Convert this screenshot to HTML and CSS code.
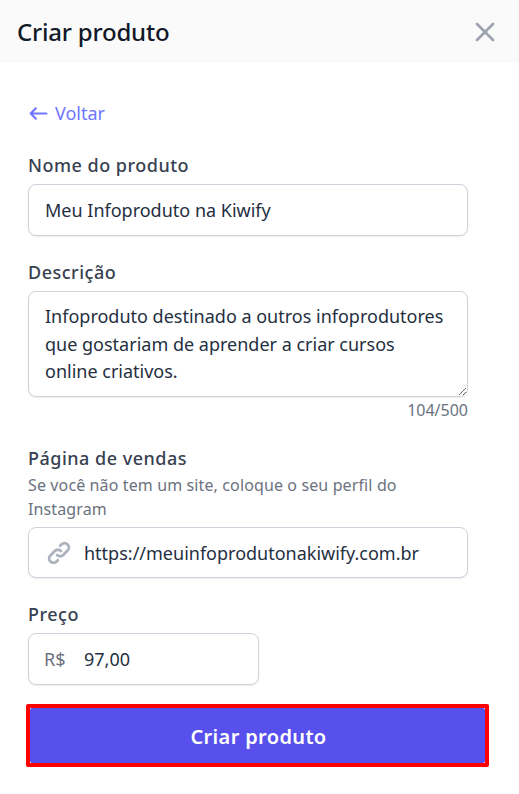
FILE: index.html
```html
<!DOCTYPE html>
<html lang="pt-BR">
<head>
<meta charset="utf-8">
<title>Criar produto</title>
<link rel="stylesheet" href="styles.css">
</head>
<body>
<header class="header">
  <h1 class="title">Criar produto</h1>
  <button class="close" type="button" aria-label="Fechar">
    <svg width="32" height="32" viewBox="0 0 24 24" fill="none" stroke="#9ca3af" stroke-width="2" stroke-linecap="round" stroke-linejoin="round"><path d="M6 18 18 6M6 6l12 12"/></svg>
  </button>
</header>
<main class="content">
  <a class="back" href="#"><svg class="back-icon" width="21" height="21" viewBox="0 0 20 20" fill="none" stroke="currentColor" stroke-width="2" stroke-linecap="round" stroke-linejoin="round"><path d="M7.5 5 2.5 10l5 5M2.5 10h15"/></svg>Voltar</a>
  <form class="form">
    <div class="field field-name">
      <label class="label" for="nome">Nome do produto</label>
      <input class="control" id="nome" value="Meu Infoproduto na Kiwify">
    </div>
    <div class="field field-desc">
      <label class="label" for="desc">Descrição</label>
      <textarea class="control area" id="desc">Infoproduto destinado a outros infoprodutores que gostariam de aprender a criar cursos online criativos.</textarea>
      <div class="counter">104/500</div>
    </div>
    <div class="field field-page">
      <label class="label" for="url">Página de vendas</label>
      <p class="hint">Se você não tem um site, coloque o seu perfil do Instagram</p>
      <div class="control wrap">
        <svg class="link-icon" width="26" height="26" viewBox="0 0 24 24" fill="none" stroke="#adb3bd" stroke-width="2.6" stroke-linecap="round" stroke-linejoin="round"><path d="M13.8 10.2a4 4 0 0 0-5.7 0l-4 4a4 4 0 0 0 5.7 5.7l1.1-1.1"/><path d="M10.2 13.8a4 4 0 0 0 5.7 0l4-4a4 4 0 0 0-5.7-5.7l-1.1 1.1"/></svg>
        <input class="bare" id="url" value="https://meuinfoprodutonakiwify.com.br">
      </div>
    </div>
    <div class="field field-price">
      <label class="label" for="preco">Preço</label>
      <div class="control wrap price">
        <span class="currency">R$</span>
        <input class="bare" id="preco" value="97,00">
      </div>
    </div>
    <div class="highlight">
      <button class="submit" type="button">Criar produto</button>
    </div>
  </form>
</main>
</body>
</html>
```
FILE: styles.css
```css
* { box-sizing: border-box; }
html, body { margin: 0; padding: 0; }
body {
  width: 519px;
  height: 794px;
  overflow: hidden;
  background: #fff;
  font-family: "Noto Sans", "Open Sans", sans-serif;
  color: #1f2937;
}
.header {
  height: 63px;
  background: #fafafa;
  display: flex;
  align-items: center;
  justify-content: space-between;
  padding: 0 18px 0 17px;
}
.title {
  margin: 0;
  font-size: 24px;
  font-weight: 500;
  color: #111827;
  letter-spacing: -0.2px;
}
.close {
  border: 0;
  background: none;
  padding: 0;
  width: 32px;
  height: 32px;
  display: block;
}
.content { padding: 39px 51px 0 28px; }
.back {
  display: flex;
  align-items: center;
  height: 22px;
  color: #6f76ff;
  font-size: 18px;
  text-decoration: none;
}
.back-icon { margin-right: 6px; }
.form { display: flex; flex-direction: column; }
.field { display: flex; flex-direction: column; }
.field-name { margin-top: 29px; }
.field-desc { margin-top: 24px; }
.field-page { margin-top: 26px; }
.field-price { margin-top: 24px; }
.label {
  font-size: 18px;
  line-height: 24px;
  font-weight: 500;
  color: #374151;
  margin-bottom: 7px;
  letter-spacing: 0.5px;
}
.field-page .label { margin-bottom: 3px; }
.control {
  width: 100%;
  height: 52px;
  border: 1px solid #d1d1de;
  border-radius: 8px;
  background: #fff;
  box-shadow: 0 1px 2px rgba(0, 0, 0, 0.07);
  padding: 0 16px;
  font: inherit;
  font-size: 18px;
  color: #252f3f;
  outline: none;
}
.area {
  height: 106px;
  padding: 11px 16px;
  line-height: 27.5px;
  resize: vertical;
  display: block;
  overflow: hidden;
}
.counter {
  font-size: 16px;
  line-height: 20px;
  color: #6b7280;
  text-align: right;
  margin-top: 3px;
}
.hint {
  margin: 0 0 6px;
  font-size: 16px;
  line-height: 24px;
  color: #6b7280;
  letter-spacing: 0.12px;
}
.wrap {
  display: flex;
  align-items: center;
  height: 51px;
  padding: 0 0 0 17px;
}
.link-icon { flex: none; margin-right: 12px; }
.bare {
  flex: 1;
  min-width: 0;
  border: 0;
  padding: 0;
  font: inherit;
  letter-spacing: inherit;
  color: inherit;
  background: none;
  outline: none;
}
.price { width: 231px; height: 52px; padding-left: 15px; }
.currency { color: #6b7280; width: 40px; flex: none; }
.highlight {
  margin: 19px 0 0 -2px;
  border: 4px solid #ff0000;
  border-radius: 2px;
  background: #fff;
  width: 463px;
  height: 63px;
}
.submit {
  display: block;
  width: 100%;
  height: 100%;
  border: 0;
  border-radius: 2px;
  padding: 2px 0 0 2px;
  background: #5850ec;
  color: #fff;
  font: inherit;
  font-size: 20px;
  font-weight: 600;
  letter-spacing: 0.35px;
}
```
